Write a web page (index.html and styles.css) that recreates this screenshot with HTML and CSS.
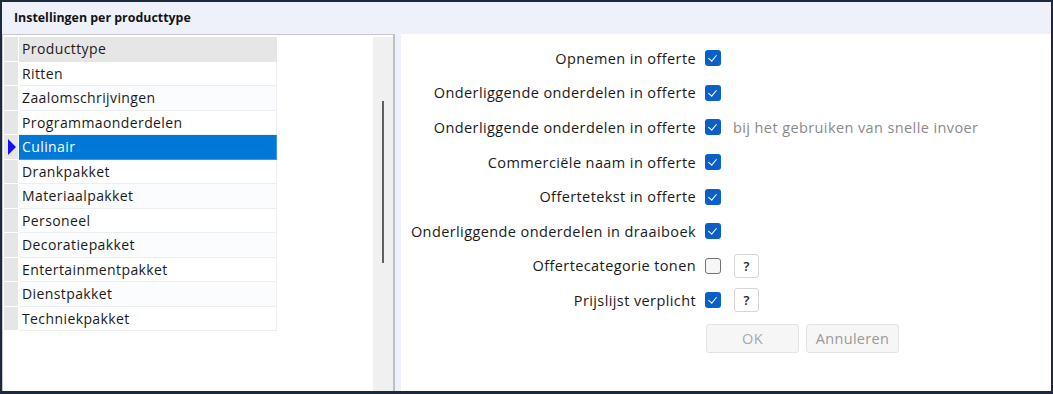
FILE: index.html
```html
<!DOCTYPE html>
<html lang="nl">
<head>
  <meta charset="UTF-8" />
  <title>Instellingen per producttype</title>
  <link rel="stylesheet" href="styles.css">
</head>
<body>
  <div class="window">
    <div class="titlebar">Instellingen per producttype</div>

    <div class="content">
      <!-- Lijst met producttypes -->
      <div class="list-panel">
        <div class="grid">
          <div class="row header"><span class="marker"></span><span class="cell">Producttype</span></div>
          <div class="row"><span class="marker"></span><span class="cell">Ritten</span></div>
          <div class="row alt"><span class="marker"></span><span class="cell">Zaalomschrijvingen</span></div>
          <div class="row"><span class="marker"></span><span class="cell">Programmaonderdelen</span></div>
          <div class="row selected"><span class="marker"><span class="arrow"></span></span><span class="cell">Culinair</span></div>
          <div class="row"><span class="marker"></span><span class="cell">Drankpakket</span></div>
          <div class="row alt"><span class="marker"></span><span class="cell">Materiaalpakket</span></div>
          <div class="row"><span class="marker"></span><span class="cell">Personeel</span></div>
          <div class="row alt"><span class="marker"></span><span class="cell">Decoratiepakket</span></div>
          <div class="row"><span class="marker"></span><span class="cell">Entertainmentpakket</span></div>
          <div class="row alt"><span class="marker"></span><span class="cell">Dienstpakket</span></div>
          <div class="row"><span class="marker"></span><span class="cell">Techniekpakket</span></div>
        </div>
        <div class="scrollbar"><div class="thumb"></div></div>
      </div>

      <!-- Instellingen -->
      <div class="form-panel">
        <div class="form">
          <label class="label">Opnemen in offerte</label>
          <span class="check on"></span>
          <span></span>

          <label class="label">Onderliggende onderdelen in offerte</label>
          <span class="check on"></span>
          <span></span>

          <label class="label">Onderliggende onderdelen in offerte</label>
          <span class="check on"></span>
          <span class="hint">bij het gebruiken van snelle invoer</span>

          <label class="label">Commerciële naam in offerte</label>
          <span class="check on"></span>
          <span></span>

          <label class="label">Offertetekst in offerte</label>
          <span class="check on"></span>
          <span></span>

          <label class="label">Onderliggende onderdelen in draaiboek</label>
          <span class="check on"></span>
          <span></span>

          <label class="label">Offertecategorie tonen</label>
          <span class="check"></span>
          <span><button class="help">?</button></span>

          <label class="label">Prijslijst verplicht</label>
          <span class="check on"></span>
          <span><button class="help">?</button></span>
        </div>

        <div class="buttons">
          <button class="btn" disabled>OK</button>
          <button class="btn">Annuleren</button>
        </div>
      </div>
    </div>
  </div>
</body>
</html>
```

FILE: styles.css
```css
body {
  margin: 0;
  padding: 0;
  font-family: "Open Sans", "Noto Sans", sans-serif;
  color: #1a1a1a;
  background: #1b2a3d;
}

.window {
  box-sizing: border-box;
  width: 1053px;
  height: 394px;
  border: 2px solid #1b2a3d;
  border-bottom-width: 3px;
  background: #eef1fa;
  display: flex;
  flex-direction: column;
}

.titlebar {
  height: 32px;
  line-height: 31px;
  padding-left: 12px;
  font-size: 12.4px;
  font-weight: bold;
  color: #141414;
}

.content {
  flex: 1;
  display: flex;
  gap: 6px;
  min-height: 0;
}

/* Lijst links */
.list-panel {
  width: 389px;
  background: #fff;
  border-top: 1px solid #c8c8c8;
  border-left: 1px solid #c8c8c8;
  border-right: 2px solid #c0c0c4;
  display: flex;
  padding-left: 1px;
}

.grid {
  width: 273px;
  padding-top: 2px;
}

.row {
  display: flex;
  height: 24.5px;
  box-sizing: border-box;
  font-size: 14px;
  letter-spacing: 0.4px;
}

.marker {
  width: 14px;
  margin-right: 1px;
  background: #e6e6e6;
  border-bottom: 1px solid #fff;
  box-sizing: border-box;
  position: relative;
}

.cell {
  flex: 1;
  padding-left: 3px;
  line-height: 23px;
  border-bottom: 1px solid #eceef2;
  border-right: 1px solid #eceef2;
}

.row.alt .cell {
  background: #fbfcfe;
}

.row.header .cell {
  background: #e6e6e6;
  border-color: #e6e6e6;
}

.row.selected .cell {
  background: #0078d7;
  color: #fff;
  border-color: #3a97e0;
}

.arrow {
  position: absolute;
  left: 4px;
  top: 4px;
  width: 0;
  height: 0;
  border-top: 8px solid transparent;
  border-bottom: 8px solid transparent;
  border-left: 8px solid #1010f0;
}

.scrollbar {
  margin-left: auto;
  margin-top: 2px;
  width: 20px;
  background: #f0f0f0;
  position: relative;
}

.thumb {
  position: absolute;
  left: 9px;
  top: 64px;
  width: 2px;
  height: 162px;
  background: #606060;
}

/* Formulier rechts */
.form-panel {
  flex: 1;
  background: #fff;
  padding-top: 7px;
}

.form {
  display: grid;
  grid-template-columns: 295px 17px auto;
  grid-auto-rows: 34.6px;
  column-gap: 9px;
  align-items: center;
}

.label {
  text-align: right;
  font-size: 14.5px;
  letter-spacing: 0.4px;
}

.check {
  box-sizing: border-box;
  width: 16px;
  height: 16px;
  border-radius: 3px;
  border: 1.5px solid #737373;
  background: #f6f6f6;
  position: relative;
}

.check.on {
  border: none;
  background: #0b5fc6;
}

.check.on::after {
  content: "";
  position: absolute;
  left: 5px;
  top: 3px;
  width: 4px;
  height: 7px;
  border-right: 1.2px solid #fff;
  border-bottom: 1.2px solid #fff;
  transform: rotate(40deg);
}

.hint {
  font-size: 14.5px;
  letter-spacing: 0.4px;
  color: #8a8a8a;
  padding-left: 2px;
}

.help {
  width: 25px;
  height: 24px;
  margin-left: 3px;
  padding: 0;
  border: 1px solid #d6d6d6;
  border-radius: 3px;
  background: #fff;
  font-family: "Open Sans", sans-serif;
  font-size: 13px;
  font-weight: 600;
  color: #222;
}

.buttons {
  display: flex;
  gap: 7px;
  margin-top: 6px;
  padding-left: 305px;
}

.btn {
  width: 93px;
  height: 29px;
  border: 1px solid #e3e3e3;
  border-radius: 3px;
  background: #f6f6f6;
  font-family: "Open Sans", sans-serif;
  font-size: 14.5px;
  letter-spacing: 0.3px;
  color: #999;
}

.btn:disabled {
  color: #a8a8a8;
}
```
